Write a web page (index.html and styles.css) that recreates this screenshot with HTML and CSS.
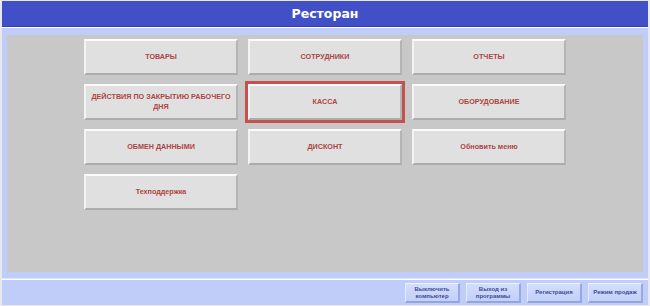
FILE: index.html
```html
<!DOCTYPE html>
<html lang="ru">
<head>
    <meta charset="UTF-8">
    <title>Ресторан</title>
    <link rel="stylesheet" href="styles.css">
</head>
<body>
    <div class="frame">
        <!-- Header -->
        <div class="header">Ресторан</div>

        <!-- Main menu -->
        <div class="main">
            <div class="panel">
                <div class="menu-grid">
                    <div class="menu-btn">ТОВАРЫ</div>
                    <div class="menu-btn">СОТРУДНИКИ</div>
                    <div class="menu-btn">ОТЧЕТЫ</div>
                    <div class="menu-btn">ДЕЙСТВИЯ ПО ЗАКРЫТИЮ РАБОЧЕГО<br>ДНЯ</div>
                    <div class="menu-btn selected">КАССА</div>
                    <div class="menu-btn">ОБОРУДОВАНИЕ</div>
                    <div class="menu-btn">ОБМЕН ДАННЫМИ</div>
                    <div class="menu-btn">ДИСКОНТ</div>
                    <div class="menu-btn">Обновить меню</div>
                    <div class="menu-btn">Техподдержка</div>
                </div>
            </div>
        </div>

        <!-- Footer -->
        <div class="footer">
            <div class="foot-btn">Выключить компьютер</div>
            <div class="foot-btn">Выход из программы</div>
            <div class="foot-btn">Регистрация</div>
            <div class="foot-btn">Режим продаж</div>
        </div>
    </div>
</body>
</html>
```

FILE: styles.css
```css
body {
    margin: 0;
    padding: 0;
    background-color: #e8e8ee;
    font-family: "Liberation Sans", Arial, sans-serif;
}
.frame {
    width: 646px;
    height: 304px;
    margin: 1px 2px 1px 2px;
    display: flex;
    flex-direction: column;
    background-color: #bfcdf8;
}
.header {
    height: 25px;
    line-height: 25px;
    background-color: #4250c8;
    border-bottom: 1px solid #3440a8;
    color: #fff;
    font-family: "DejaVu Sans", Verdana, sans-serif;
    font-size: 12.5px;
    font-weight: bold;
    text-align: center;
}
.main {
    border-top: 1px solid #fff;
    padding: 7px 5px 6px 5px;
    border-bottom: 1px solid #dfe6fc;
}
.panel {
    height: 237px;
    background-color: #c8c8c8;
    padding-top: 4px;
    box-sizing: border-box;
}
.menu-grid {
    display: grid;
    grid-template-columns: repeat(3, 154px);
    grid-auto-rows: 36px;
    column-gap: 10px;
    row-gap: 9px;
    justify-content: center;
}
.menu-btn {
    display: flex;
    align-items: center;
    justify-content: center;
    text-align: center;
    padding: 0;
    box-sizing: border-box;
    white-space: nowrap;
    background-color: #e0e0e0;
    border-top: 2px solid #fbfbfb;
    border-left: 2px solid #f4f4f4;
    border-right: 2px solid #b4b4b4;
    border-bottom: 2px solid #acacac;
    color: #ad4545;
    font-size: 7.2px;
    font-weight: bold;
    line-height: 10px;
}
.menu-btn.selected {
    outline: 3px solid #c5504d;
}
.footer {
    flex: 1;
    border-top: 1px solid #fff;
    display: flex;
    justify-content: flex-end;
    gap: 6px;
    padding: 3px 5px 0 0;
}
.foot-btn {
    width: 55px;
    height: 20px;
    box-sizing: border-box;
    display: flex;
    align-items: center;
    justify-content: center;
    text-align: center;
    background: linear-gradient(#d4ddfc, #c2cff8);
    border-top: 1px solid #eef2ff;
    border-left: 1px solid #e6ecff;
    border-right: 2px solid #98a8e0;
    border-bottom: 2px solid #94a4dc;
    color: #3c4c98;
    font-size: 6px;
    font-weight: bold;
    line-height: 7px;
}
```
